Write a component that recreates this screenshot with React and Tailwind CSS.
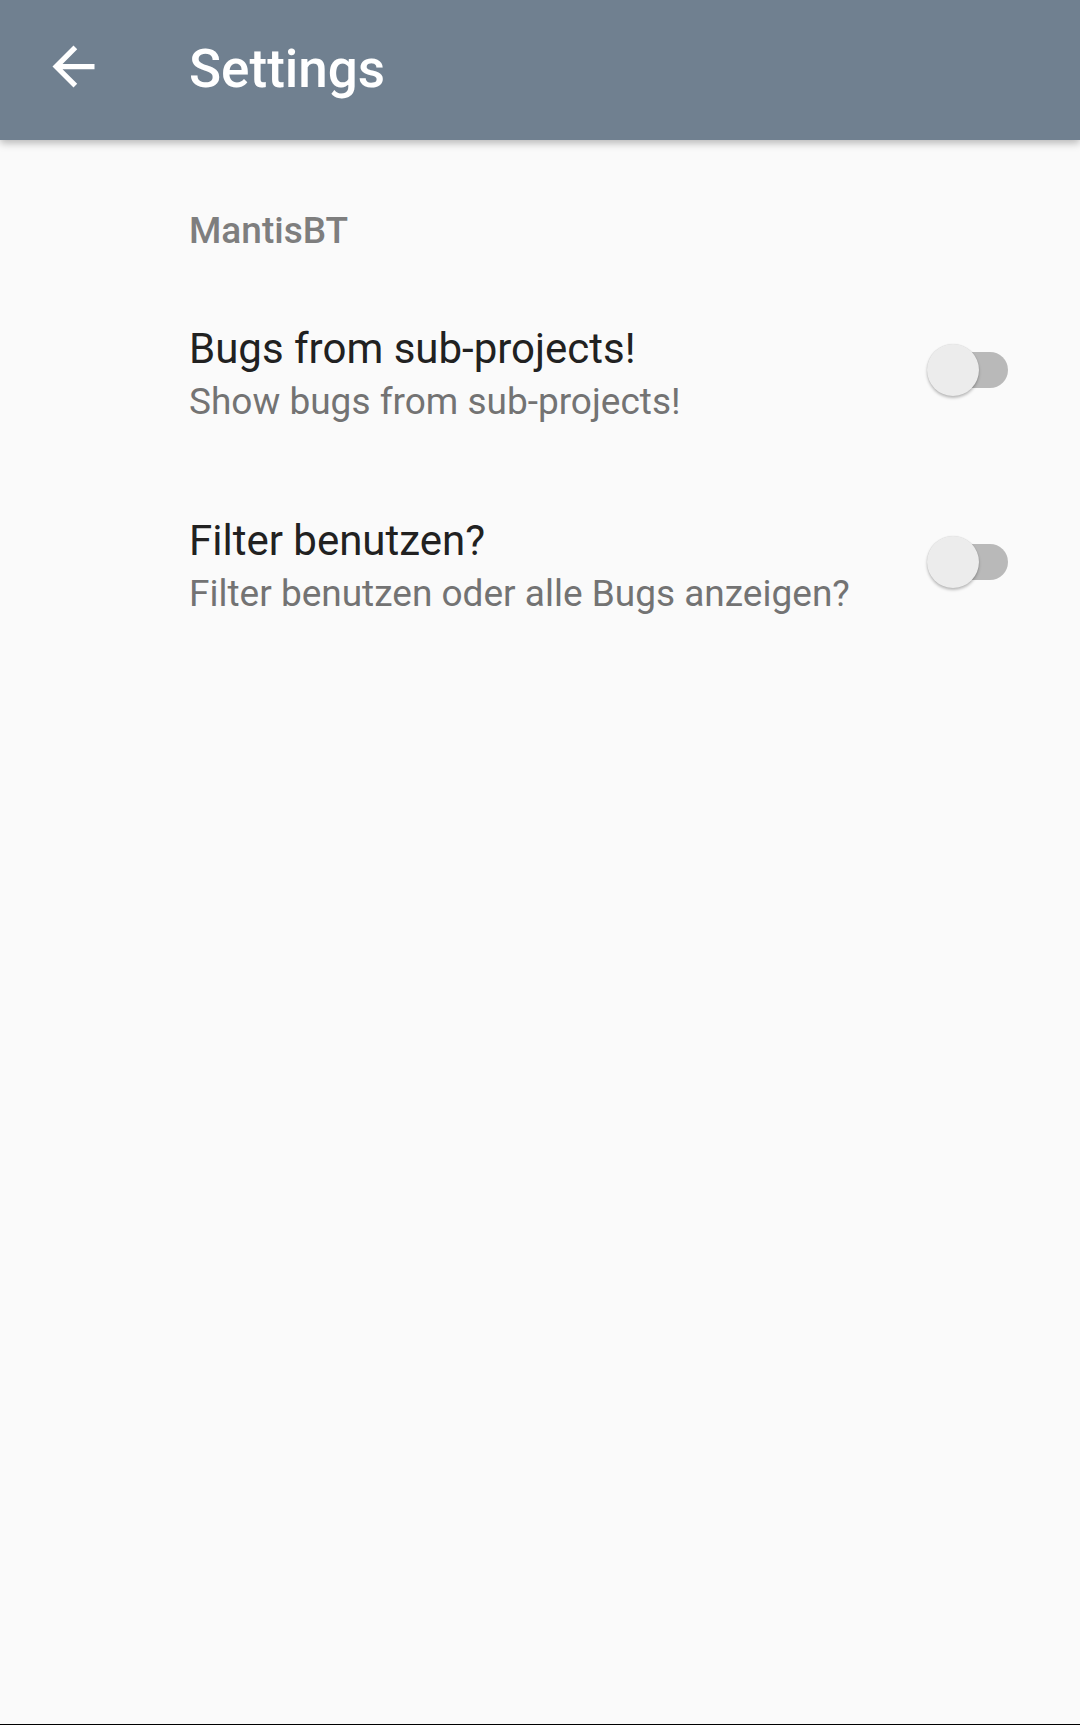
import React from "react";

function Toggle() {
  return (
    <div className="relative w-[88px] h-[52px] flex items-center justify-end">
      <div className="w-[80px] h-[36px] rounded-full bg-[#b9b9b9]" />
      <div className="absolute left-[7px] top-0 w-[52px] h-[52px] rounded-full bg-[#ececec] shadow-[0_2px_3px_rgba(0,0,0,0.25),0_0_1px_rgba(0,0,0,0.15)]" />
    </div>
  );
}

function Row({ title, summary }) {
  return (
    <div className="flex items-center h-[192px] pl-[189px] pr-[72px]">
      <div className="flex-1 flex flex-col">
        <div className="text-[42px] leading-[50px] text-[#212121]">{title}</div>
        <div className="mt-[4px] text-[37px] leading-[48px] text-[#737373]">{summary}</div>
      </div>
      <div className="mb-[11px]">
        <Toggle />
      </div>
    </div>
  );
}

export default function App() {
  return (
    <div
      className="w-[1080px] h-[1725px] bg-[#fafafa] flex flex-col overflow-hidden"
      style={{ fontFamily: "Roboto, 'Noto Sans', sans-serif" }}
    >
      <div className="relative z-10 h-[140px] bg-[#708090] flex items-start pt-[35px] shadow-[0_3px_8px_rgba(0,0,0,0.28)]">
        <svg className="ml-[42px] w-[63px] h-[63px]" viewBox="0 0 24 24" fill="#ffffff">
          <path d="M20 11H7.83l5.59-5.59L12 4l-8 8 8 8 1.41-1.41L7.83 13H20v-2z" />
        </svg>
        <div className="ml-[84px] mt-[3px] text-[53px] leading-[62px] font-medium text-white">Settings</div>
      </div>
      <div className="flex-1 flex flex-col">
        <div className="mt-[67px] pl-[189px] text-[37px] leading-[48px] font-medium text-[#7e7e7e]">MantisBT</div>
        <div className="mt-[24px]">
          <Row title="Bugs from sub-projects!" summary="Show bugs from sub-projects!" />
          <Row title="Filter benutzen?" summary="Filter benutzen oder alle Bugs anzeigen?" />
        </div>
      </div>
      <div className="h-[1px] bg-black" />
    </div>
  );
}
